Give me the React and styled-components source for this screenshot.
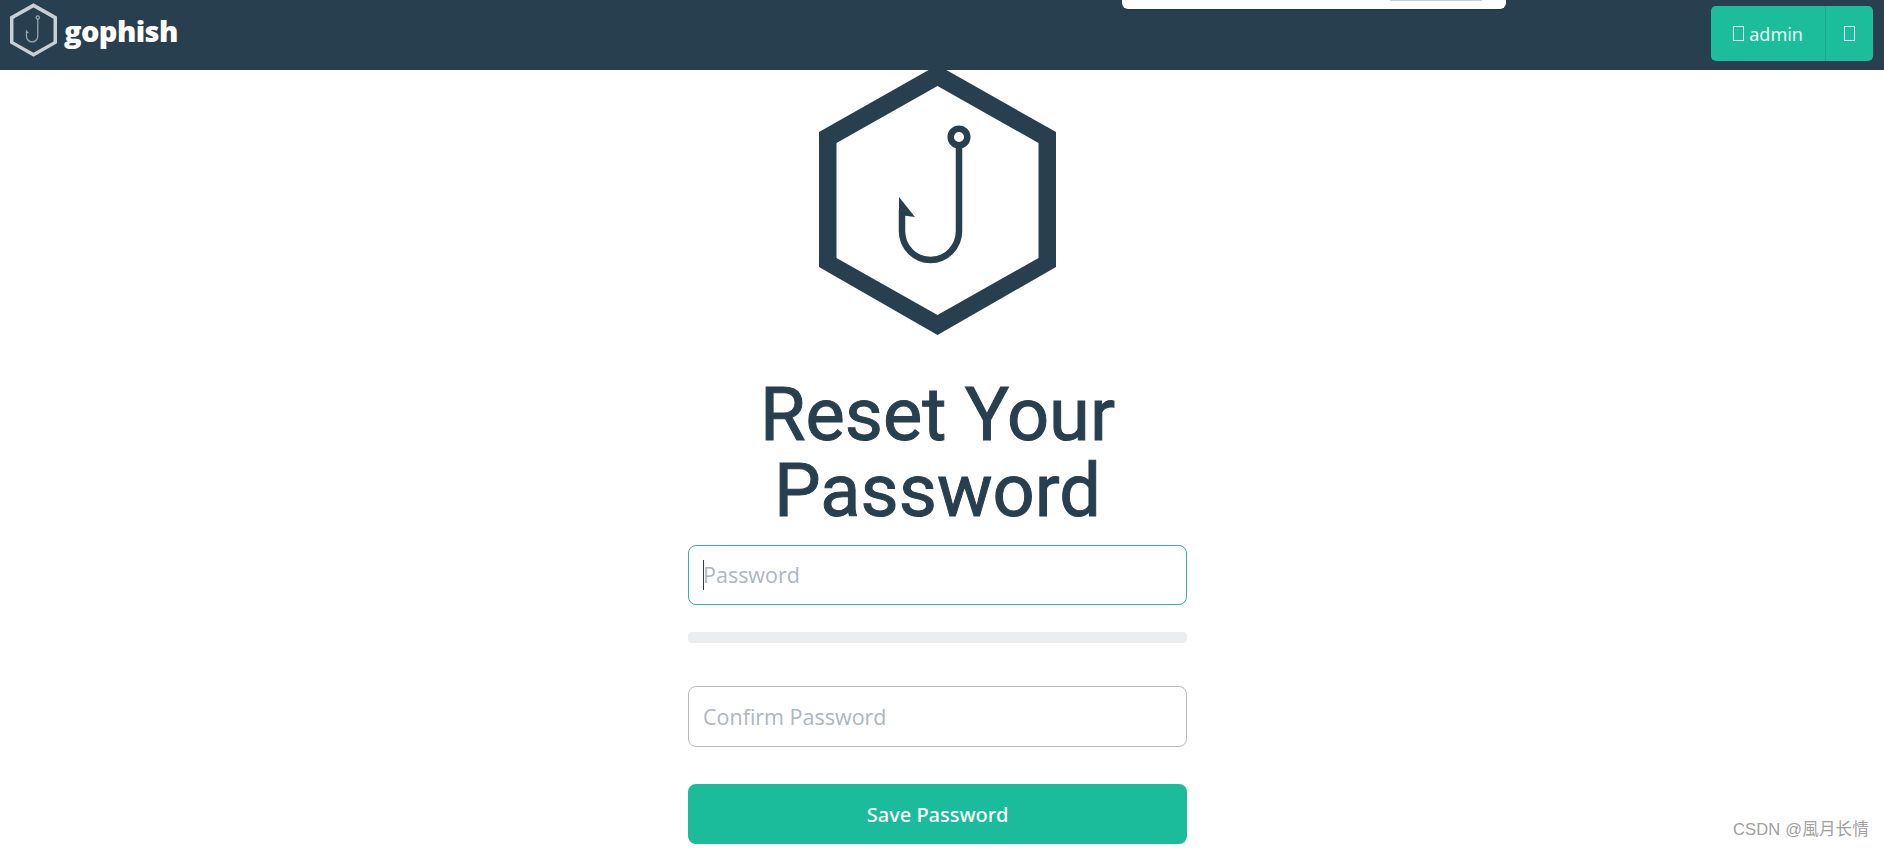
import { createGlobalStyle } from "styled-components";
import styled from "styled-components";

const GlobalStyle = createGlobalStyle`
  html, body {
    margin: 0;
    padding: 0;
    height: 848px;
    overflow: hidden;
    background: #fff;
    font-family: "Open Sans", sans-serif;
  }
  * {
    box-sizing: border-box;
  }
`;

const Page = styled.div`
  position: relative;
  height: 848px;
  overflow: hidden;
`;

const Navbar = styled.nav`
  position: relative;
  z-index: 2;
  display: flex;
  justify-content: space-between;
  align-items: flex-start;
  height: 70px;
  padding: 3px 11px 0 10px;
  background-color: #283f50;
`;

const Brand = styled.a`
  display: flex;
  align-items: center;
  gap: 7px;
  color: #fff;
  font-family: "Open Sans", sans-serif;
  font-size: 29px;
  font-weight: 800;
  letter-spacing: -0.6px;
`;

const Toast = styled.div`
  position: absolute;
  z-index: 3;
  top: -10px;
  left: 1122px;
  width: 384px;
  height: 19px;
  display: flex;
  justify-content: flex-end;
  align-items: flex-start;
  padding: 10px 24px 0 0;
  background: #fff;
  border-radius: 6px;
  box-shadow: 0 1px 1px rgba(0, 0, 0, 0.2);
`;

const ToastButton = styled.div`
  width: 92px;
  height: 1px;
  background: #c9cdd0;
`;

const UserMenu = styled.div`
  display: flex;
  height: 55px;
  margin-top: 3px;
  border-radius: 5px;
  overflow: hidden;
  color: #e6fbf6;
  font-family: "Noto Sans", sans-serif;
  font-size: 18px;
`;

const MenuPart = styled.div`
  display: flex;
  align-items: center;
  gap: 5px;
  padding: 0 ${(p) => p.$pad}px;
  background-color: #1cbd9b;
  & + & {
    border-left: 1px solid #18a98b;
  }
`;

const Tofu = styled.span`
  display: inline-block;
  width: 11px;
  height: 15px;
  border: 1.5px solid #e6fbf6;
`;

const Main = styled.main`
  display: flex;
  flex-direction: column;
  align-items: center;
  padding-right: 9px;
`;

const BigLogo = styled.svg`
  display: block;
  width: 237px;
  height: 270px;
  margin-top: -5px;
`;

const Heading = styled.h1`
  width: 500px;
  margin: 42px 0 0;
  color: #283f50;
  font-family: Roboto, sans-serif;
  font-size: 74px;
  font-weight: 400;
  -webkit-text-stroke: 1px #283f50;
  line-height: 76px;
  text-align: center;
`;

const Form = styled.form`
  display: flex;
  flex-direction: column;
  width: 499px;
  margin-top: 16px;
`;

const InputWrap = styled.div`
  position: relative;
`;

const Input = styled.input`
  display: block;
  width: 100%;
  height: ${(p) => p.$height}px;
  padding: 0 14px ${(p) => (p.$focused ? 2 : 0)}px;
  background: #fff;
  border: 1px solid ${(p) => (p.$focused ? "#3aaea0" : "#b9bcbf")};
  border-radius: 8px;
  outline: none;
  font-family: "Open Sans", sans-serif;
  font-size: 21.5px;
  &::placeholder {
    color: #aeb6bf;
    opacity: 1;
  }
`;

const Caret = styled.span`
  position: absolute;
  left: 15px;
  top: 15px;
  width: 1px;
  height: 30px;
  background: #283f50;
`;

const StrengthBar = styled.div`
  height: 11px;
  margin: 27px 0 43px;
  background: #ecedee;
  border-radius: 4px;
`;

const SaveButton = styled.button`
  height: 60px;
  margin-top: 37px;
  background-color: #1abc9c;
  border: none;
  border-radius: 8px;
  color: #fff;
  font-family: "Noto Sans", sans-serif;
  font-size: 20px;
  font-weight: 500;
`;

const Watermark = styled.div`
  position: absolute;
  right: 15px;
  bottom: 8px;
  color: #a0a0a0;
  font-family: "Liberation Sans", "Noto Sans CJK TC", sans-serif;
  font-size: 16.5px;
  letter-spacing: 0.2px;
`;

function HexHook({ small }) {
  // same drawing for navbar and page, only the colours change
  const hexColor = small ? "#c9cfd3" : "#283f50";
  const hookColor = small ? "#9aa6ae" : "#283f50";
  return (
    <>
      <path
        fillRule="evenodd"
        fill={hexColor}
        d="M118.5 0 L237 67 L237 202 L118.5 270 L0 202 L0 67 Z M118.5 21 L17.5 78 L17.5 193 L118.5 250 L219.5 193 L219.5 78 Z"
      />
      <circle cx="140" cy="72" r="8.3" fill="none" stroke={hookColor} strokeWidth="6.5" />
      <path
        d="M140 80 L140 166 A28.5 29 0 0 1 83 166 L83 145"
        fill="none"
        stroke={hookColor}
        strokeWidth="6.5"
      />
      <path d="M80 132 L96 152 L80 150 Z" fill={hookColor} />
    </>
  );
}

function App() {
  return (
    <Page>
      <GlobalStyle />
      <Navbar>
        <Brand>
          <svg width="47" height="54" viewBox="0 0 237 270">
            <HexHook small />
          </svg>
          gophish
        </Brand>
        <UserMenu>
          <MenuPart $pad={22}>
            <Tofu />
            admin
          </MenuPart>
          <MenuPart $pad={18}>
            <Tofu />
          </MenuPart>
        </UserMenu>
      </Navbar>
      <Toast>
        <ToastButton />
      </Toast>
      <Main>
        <BigLogo viewBox="0 0 237 270">
          <HexHook />
        </BigLogo>
        <Heading>Reset Your Password</Heading>
        <Form>
          <InputWrap>
            <Input type="password" placeholder="Password" $height={60} $focused />
            <Caret />
          </InputWrap>
          <StrengthBar />
          <Input type="password" placeholder="Confirm Password" $height={61} />
          <SaveButton type="button">Save Password</SaveButton>
        </Form>
      </Main>
      <Watermark>CSDN @風月长情</Watermark>
    </Page>
  );
}

export default App;
